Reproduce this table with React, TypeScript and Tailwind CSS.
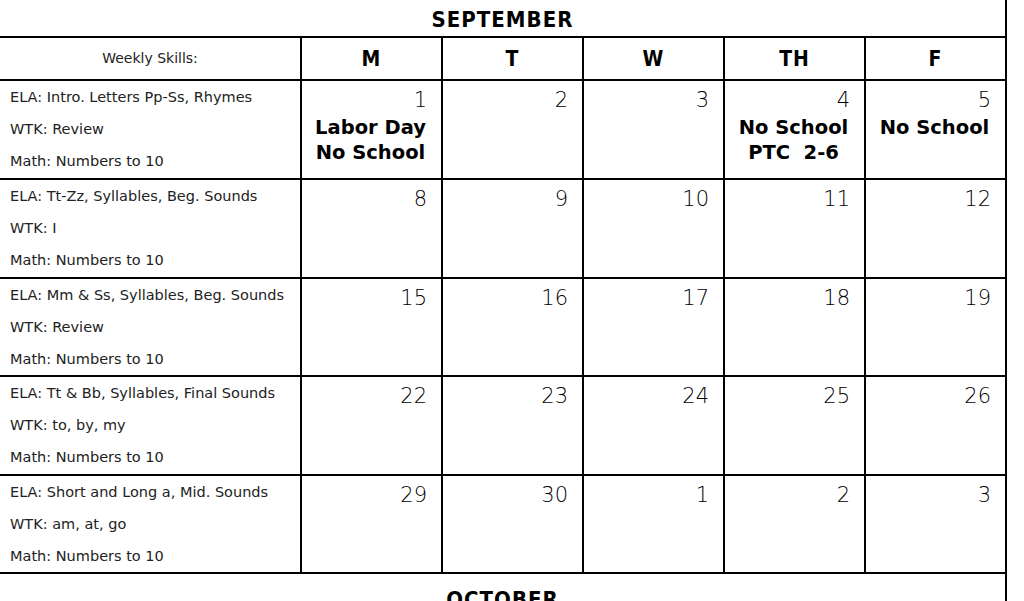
type Day = { n: number; notes?: string[] };
type Week = { skills: string[]; days: Day[]; h: string };

const weeks: Week[] = [
    {
        skills: ["ELA: Intro. Letters Pp-Ss, Rhymes", "WTK: Review", "Math: Numbers to 10"],
        days: [{ n: 1, notes: ["Labor Day", "No School"] }, { n: 2 }, { n: 3 }, { n: 4, notes: ["No School", "PTC  2-6"] }, { n: 5, notes: ["No School"] }],
        h: "h-[97px]",
    },
    {
        skills: ["ELA: Tt-Zz, Syllables, Beg. Sounds", "WTK: I", "Math: Numbers to 10"],
        days: [{ n: 8 }, { n: 9 }, { n: 10 }, { n: 11 }, { n: 12 }],
        h: "h-[97px]",
    },
    {
        skills: ["ELA: Mm & Ss, Syllables, Beg. Sounds", "WTK: Review", "Math: Numbers to 10"],
        days: [{ n: 15 }, { n: 16 }, { n: 17 }, { n: 18 }, { n: 19 }],
        h: "h-[96px]",
    },
    {
        skills: ["ELA: Tt & Bb, Syllables, Final Sounds", "WTK: to, by, my", "Math: Numbers to 10"],
        days: [{ n: 22 }, { n: 23 }, { n: 24 }, { n: 25 }, { n: 26 }],
        h: "h-[97px]",
    },
    {
        skills: ["ELA: Short and Long a, Mid. Sounds", "WTK: am, at, go", "Math: Numbers to 10"],
        days: [{ n: 29 }, { n: 30 }, { n: 1 }, { n: 2 }, { n: 3 }],
        h: "h-[96px]",
    },
];

const dayNames = ["M", "T", "W", "TH", "F"];

const title = "font-['DejaVu_Sans_Condensed',sans-serif] font-bold tracking-[1px] text-black";
const body = "font-['DejaVu_Sans',sans-serif] text-[#222]";

function App() {
    return (
        <div className="w-[1024px] h-[601px] bg-white overflow-hidden">
            <div className="w-[1007px] border-r-2 border-black bg-black grid grid-cols-[300px_repeat(5,139px)] gap-[2px]">
                <div className={`col-span-6 h-[36px] bg-white flex items-center justify-center pt-[2px] text-[22px] ${title}`}>SEPTEMBER</div>

                <div className={`h-[41px] bg-white flex items-center justify-center text-[14px] ${body}`}>Weekly Skills:</div>
                {dayNames.map(d => (
                    <div key={d} className={`h-[41px] bg-white flex items-center justify-center pt-[2px] text-[21px] ${title}`}>{d}</div>
                ))}

                {weeks.map((w, i) => (
                    <>
                        <div key={"s" + i} className={`${w.h} bg-white pl-[10px] pt-[6px] flex flex-col gap-[12px] text-[14.5px] leading-[20px] ${body}`}>
                            {w.skills.map(s => <p key={s}>{s}</p>)}
                        </div>
                        {w.days.map((d, j) => (
                            <div key={i + "-" + j} className={`${w.h} bg-white flex flex-col pt-[8px] ${body}`}>
                                <p className="text-right pr-[14px] text-[21px] leading-[22px] font-light text-black">{d.n}</p>
                                {d.notes && (
                                    <div className="mt-[4px] text-center font-bold text-[19.5px] leading-[25px] text-black pr-[2px]">
                                        {d.notes.map(t => <p key={t} className="whitespace-pre">{t}</p>)}
                                    </div>
                                )}
                            </div>
                        ))}
                    </>
                ))}

                <div className={`col-span-6 h-[40px] bg-white flex items-start justify-center pt-[9px] text-[22px] ${title}`}>OCTOBER</div>
            </div>
        </div>
    )
}

export default App
